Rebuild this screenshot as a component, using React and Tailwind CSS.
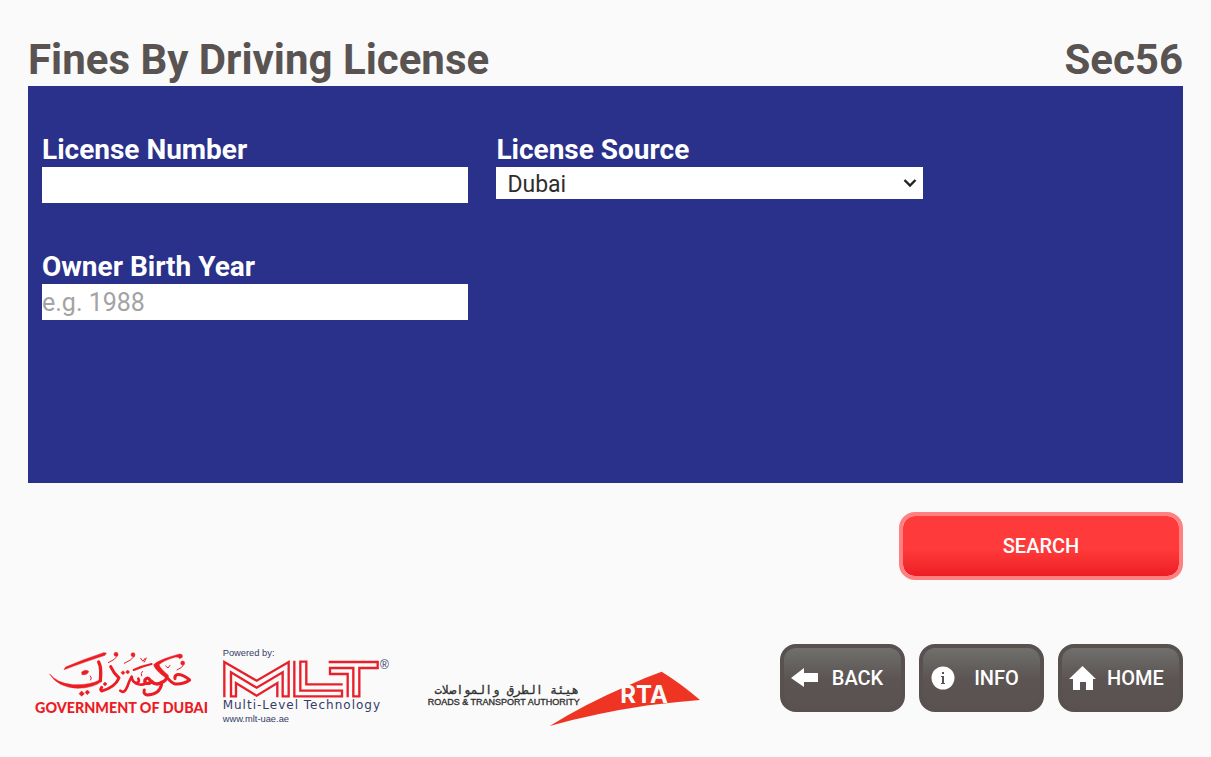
import { useState } from "react";

function DubaiLogo() {
  return (
    <svg viewBox="24 0 540 270" className="h-[90px] w-[180px] shrink-0" role="img" aria-label="Government of Dubai">
      <g transform="translate(75 24)">
        <g fill="#ec1c24" stroke="#ec1c24" strokeWidth="1.5">
          <path d="M57 65L62 57Q115 34 176 14L184 15L180 22Q124 40 57 65Z" />
          <path d="M14 78Q36 106 84 110Q136 112 164 96L170 100Q146 120 98 121Q38 118 14 78Z" />
          <path d="M110 72Q122 62 131 70Q128 82 111 80Z" />
          <path d="M326 50Q338 36 404 18Q414 18 412 28L404 32Q402 26 392 27Q354 38 342 50Q346 62 370 82L360 88Q328 64 326 50Z" />
          <path d="M110 129l8 8-8 8-8-8zM127 126l7 7-7 7-7-7zM180 102l6 6-6 6-6-6zM234 68l6 6-6 6-6-6zM248 66l6 6-6 6-6-6z" />
          <circle cx="213" cy="19" r="6" />
          <circle cx="264" cy="20" r="6" />
          <circle cx="413" cy="45" r="6" />
        </g>
        <g fill="none" stroke="#ec1c24" strokeLinecap="round" strokeLinejoin="round">
          <path strokeWidth="10" d="M161 42Q170 58 166 98" />
          <path strokeWidth="9" d="M197 56Q206 76 222 90Q210 118 170 129Q164 126 170 118" />
          <path strokeWidth="8" d="M226 128Q238 138 246 118Q252 100 260 86Q262 106 278 104Q284 100 280 92M272 106Q290 114 302 106" />
          <path strokeWidth="10" d="M300 96Q308 84 316 98Q318 108 304 106Q298 104 300 96M317 98Q332 114 348 104Q364 98 366 86" />
          <path strokeWidth="9" d="M350 108Q344 140 306 141Q294 138 298 126" />
          <path strokeWidth="9" d="M364 86Q378 104 390 108Q414 110 434 96Q412 78 396 80Q388 84 390 92" />
          <path strokeWidth="6" d="M266 66Q292 54 320 48" />
          <path strokeWidth="3" d="M218 23Q210 36 190 44M269 24Q258 38 238 46M417 49Q412 60 396 66M287 31L294 40L300 31M304 30L298 42M362 54L369 60L375 52M137 96Q142 90 136 84M290 84Q286 76 292 70" />
        </g>
      </g>
      <text x="45" y="218" fill="#ec1c24" fontFamily="Lato, sans-serif" fontWeight="900" fontSize="43">GOVERNMENT OF DUBAI</text>
    </svg>
  );
}

function MltLogo() {
  return (
    <svg viewBox="15 0 525 270" className="h-[90px] w-[175px] shrink-0" role="img" aria-label="MLT Multi-Level Technology">
      <g fill="#363c69" fontFamily="'Liberation Sans', sans-serif">
        <text x="23" y="49" fontSize="28">Powered by:</text>
        <text x="23" y="207" fontFamily="'DejaVu Sans', sans-serif" fontSize="36" letterSpacing="3">Multi-Level Technology</text>
        <text x="23" y="246" fontSize="28">www.mlt-uae.ae</text>
        <text x="495" y="86" fontSize="36">®</text>
      </g>
      <g fill="none" stroke="#e8202a" strokeWidth="7">
        <path d="M28 172V66L125 122L221 66V169H203V97L125 143L48 97V169H63V129L125 167L187 129V172" />
        <path d="M238 62V169H381V152H256V65H274V133H383" />
        <path d="M341 66H488V84H433V169H415V84H345V102H398V172" />
      </g>
    </svg>
  );
}

function RtaLogo() {
  return (
    <svg viewBox="30 -60 840 270" className="h-[90px] w-[280px] shrink-0" role="img" aria-label="Roads and Transport Authority">
      <path fill="#ee3524" d="M404 198Q510 132 636 78Q690 52 740 35Q800 72 855 120Q780 126 700 136Q540 160 404 198Z" />
      <text x="616" y="129" fill="#fafafa" fontFamily="Inter, sans-serif" fontWeight="700" fontSize="72">RTA</text>
      <g fill="#303030" stroke="#303030">
        <text x="492" y="102" direction="rtl" fontFamily="'DejaVu Sans Mono', monospace" fontSize="36">هيئة الطرق والمواصلات</text>
        <text x="38" y="134" fontFamily="'Liberation Sans', sans-serif" fontSize="27">ROADS &amp; TRANSPORT AUTHORITY</text>
      </g>
    </svg>
  );
}

function ArrowIcon() {
  return (
    <svg viewBox="0 0 27 20" className="h-5 w-[27px]" aria-hidden="true">
      <path fill="#fff" d="M0 10L13 0v5h14v9H13v5z" />
    </svg>
  );
}

function InfoIcon() {
  return (
    <svg viewBox="0 0 24 24" className="size-6" aria-hidden="true">
      <circle cx="12" cy="12" r="11.5" fill="#fff" />
      <path fill="#5a5352" d="M11 6h2v2h-2zM10 10h3v7h1v1h-4v-1h1v-6h-1z" />
    </svg>
  );
}

function HomeIcon() {
  return (
    <svg viewBox="0 0 27 24" className="h-6 w-[27px]" aria-hidden="true">
      <path fill="#fff" d="M13.5 0L27 13h-3v11h-7v-8h-6v8H4V13H0z" />
    </svg>
  );
}

const labelClass = "block pt-px text-[28px] leading-[35px] font-bold text-white";

function NavButton({ icon, children }) {
  return (
    <button
      type="button"
      className="flex h-[68px] w-[125px] items-center rounded-2xl border-4 border-[#585150] bg-linear-to-b from-[#70706d] via-[#5c5554] via-50% to-[#5a5150] pr-1 pl-1.5 text-xl font-medium text-white"
    >
      <span className="flex w-7 justify-center">{icon}</span>
      <span className="flex-1 text-center">{children}</span>
    </button>
  );
}

export default function App() {
  const [source, setSource] = useState("Dubai");
  return (
    <div className="min-h-screen bg-[#fafafa] px-7 pt-[34px] pb-6 font-[Roboto,sans-serif]">
      <header className="flex items-center justify-between text-[42px] leading-[52px] font-bold text-[#595352]">
        <h1>Fines By Driving License</h1>
        <span>Sec56</span>
      </header>
      <form onSubmit={(e) => e.preventDefault()}>
        <div className="grid min-h-[397px] grid-cols-[426fr_426fr_218fr] content-start gap-x-7 gap-y-[45px] bg-[#2a318b] px-3.5 pt-[45px]">
          <div>
            <label htmlFor="number" className={labelClass}>License Number</label>
            <input id="number" type="text" className="block h-9 w-full bg-white text-[25px] outline-none" />
          </div>
          <div>
            <label htmlFor="source" className={labelClass}>License Source</label>
            <div className="relative">
              <select
                id="source"
                value={source}
                onChange={(e) => setSource(e.target.value)}
                className="block h-8 w-full appearance-none bg-white pt-px pl-[11px] text-[23px] text-[#2e2e2e] outline-none"
              >
                <option>Dubai</option>
              </select>
              <svg viewBox="0 0 14 10" className="pointer-events-none absolute top-[11px] right-1.5 h-2.5 w-3.5" aria-hidden="true">
                <path d="M1.5 2L7 7.5L12.5 2" fill="none" stroke="#222" strokeWidth="2.4" />
              </svg>
            </div>
          </div>
          <div className="col-start-1">
            <label htmlFor="year" className={labelClass}>Owner Birth Year</label>
            <input id="year" type="text" placeholder="e.g. 1988" className="block h-9 w-full bg-white pt-px text-[25px] outline-none placeholder:text-[#a3a3a3]" />
          </div>
        </div>
        <div className="mt-[29px] flex justify-end">
          <button
            type="submit"
            className="h-[68px] w-[284px] rounded-2xl border-4 border-[#ff8080] bg-linear-to-b from-[#ff3a3a] from-55% to-[#ed1c24] bg-clip-padding text-xl font-medium text-white"
          >
            SEARCH
          </button>
        </div>
      </form>
      <footer className="mt-[60px] flex items-start justify-between">
        <div className="flex items-center">
          <DubaiLogo />
          <div className="ml-3 flex"><MltLogo /></div>
          <div className="ml-[30px] flex"><RtaLogo /></div>
        </div>
        <div className="mt-1 flex gap-3.5">
          <NavButton icon={<ArrowIcon />}>BACK</NavButton>
          <NavButton icon={<InfoIcon />}>INFO</NavButton>
          <NavButton icon={<HomeIcon />}>HOME</NavButton>
        </div>
      </footer>
    </div>
  );
}
